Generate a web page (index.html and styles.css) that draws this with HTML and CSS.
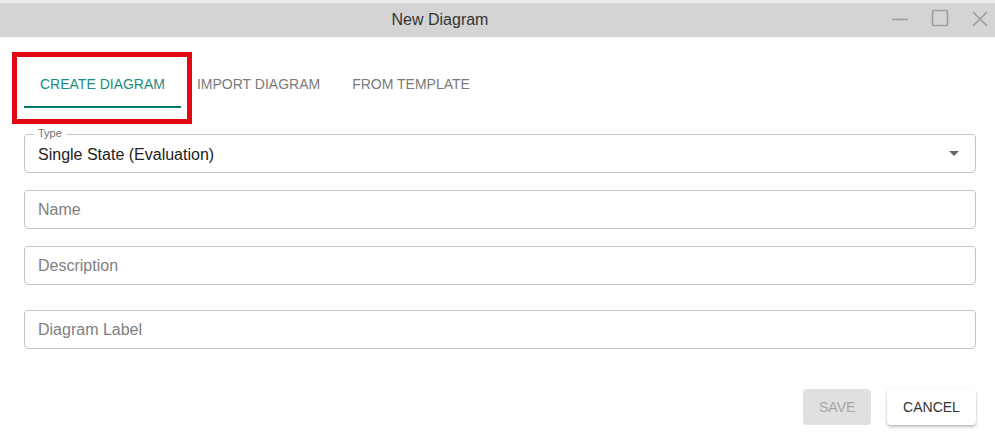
FILE: index.html
```html
<!DOCTYPE html>
<html lang="en">
<head>
    <meta charset="UTF-8">
    <meta name="viewport" content="width=device-width, initial-scale=1.0">
    <title>New Diagram</title>
    <link rel="stylesheet" href="styles.css">
</head>
<body>
    <div class="window">
        <div class="titlebar">
            <div class="title">New Diagram</div>
            <div class="controls">
                <svg class="ctrl" width="40" height="34" viewBox="0 0 40 34">
                    <line x1="12" y1="16.5" x2="28" y2="16.5" />
                </svg>
                <svg class="ctrl" width="40" height="34" viewBox="0 0 40 34">
                    <rect x="12.5" y="7.5" width="15" height="15" rx="1" />
                </svg>
                <svg class="ctrl" width="40" height="34" viewBox="0 0 40 34">
                    <line x1="13" y1="9" x2="27" y2="23" />
                    <line x1="27" y1="9" x2="13" y2="23" />
                </svg>
            </div>
        </div>

        <div class="content">
            <div class="tabs">
                <div class="tab active">
                    Create Diagram
                    <span class="highlight"></span>
                </div>
                <div class="tab">Import Diagram</div>
                <div class="tab">From Template</div>
            </div>

            <form class="form">
                <div class="field select">
                    <span class="field-label">Type</span>
                    <span class="value">Single State (Evaluation)</span>
                    <svg class="arrow" width="10" height="5" viewBox="0 0 10 5">
                        <path d="M0 0 L10 0 L5 5 Z" />
                    </svg>
                </div>
                <input class="field" type="text" placeholder="Name">
                <input class="field" type="text" placeholder="Description">
                <input class="field label-field" type="text" placeholder="Diagram Label">
            </form>

            <div class="actions">
                <button class="btn save" disabled>Save</button>
                <button class="btn cancel">Cancel</button>
            </div>
        </div>
    </div>
</body>
</html>
```

FILE: styles.css
```css
* {
    margin: 0;
    padding: 0;
    box-sizing: border-box;
}

body {
    font-family: "Liberation Sans", Arial, sans-serif;
    background-color: #ffffff;
    color: #222222;
}

.window {
    width: 995px;
    height: 444px;
    overflow: hidden;
}

.titlebar {
    height: 37px;
    display: flex;
    align-items: center;
    background-color: #d4d4d4;
    border-top: 3px solid #ebebeb;
}

.title {
    flex: 1;
    text-align: center;
    font-size: 16px;
    color: #333333;
}

.controls {
    display: flex;
    margin-right: -5px;
}

.ctrl {
    display: block;
    stroke: #9c9c9c;
    stroke-width: 1.6;
    fill: none;
}

.content {
    padding: 23px 19px 0 24px;
}

.tabs {
    display: flex;
}

.tab {
    position: relative;
    height: 48px;
    padding: 0 16px;
    display: flex;
    align-items: center;
    font-size: 14px;
    text-transform: uppercase;
    color: #7a7a7a;
}

.tab.active {
    color: #1a8a82;
    border-bottom: 2px solid #00796b;
    padding-top: 2px;
}

.tab.active .highlight {
    position: absolute;
    left: -12px;
    top: -8px;
    width: 180px;
    height: 72px;
    border: 5px solid #e30613;
}

.form {
    display: flex;
    flex-direction: column;
    margin-top: 26px;
}

.field {
    position: relative;
    display: flex;
    align-items: center;
    width: 952px;
    height: 39px;
    padding: 0 13px;
    border: 1px solid #c4c4c4;
    border-radius: 4px;
    font-family: inherit;
    font-size: 16px;
    color: #222222;
    outline: none;
    margin-bottom: 17px;
}

.field::placeholder {
    color: #808080;
}

.field.select {
    justify-content: space-between;
    padding-right: 16px;
}

.field-label {
    position: absolute;
    left: 9px;
    top: -8px;
    padding: 0 4px;
    background: #ffffff;
    font-size: 11px;
    color: #6e6e6e;
}

.value {
    padding-top: 2px;
}

.arrow {
    fill: #666666;
}

.field.label-field {
    margin-top: 8px;
}

.actions {
    display: flex;
    justify-content: flex-end;
    gap: 16px;
    margin-top: 23px;
}

.btn {
    height: 36px;
    padding: 0 16px;
    border: none;
    border-radius: 4px;
    font-family: inherit;
    font-size: 14px;
    text-transform: uppercase;
}

.btn.save {
    width: 68px;
    background-color: #e0e0e0;
    color: #a6a6a6;
}

.btn.cancel {
    width: 89px;
    background-color: #ffffff;
    color: #333333;
    box-shadow: 0 2px 3px rgba(0, 0, 0, 0.25), 0 0 2px rgba(0, 0, 0, 0.08);
}
```
